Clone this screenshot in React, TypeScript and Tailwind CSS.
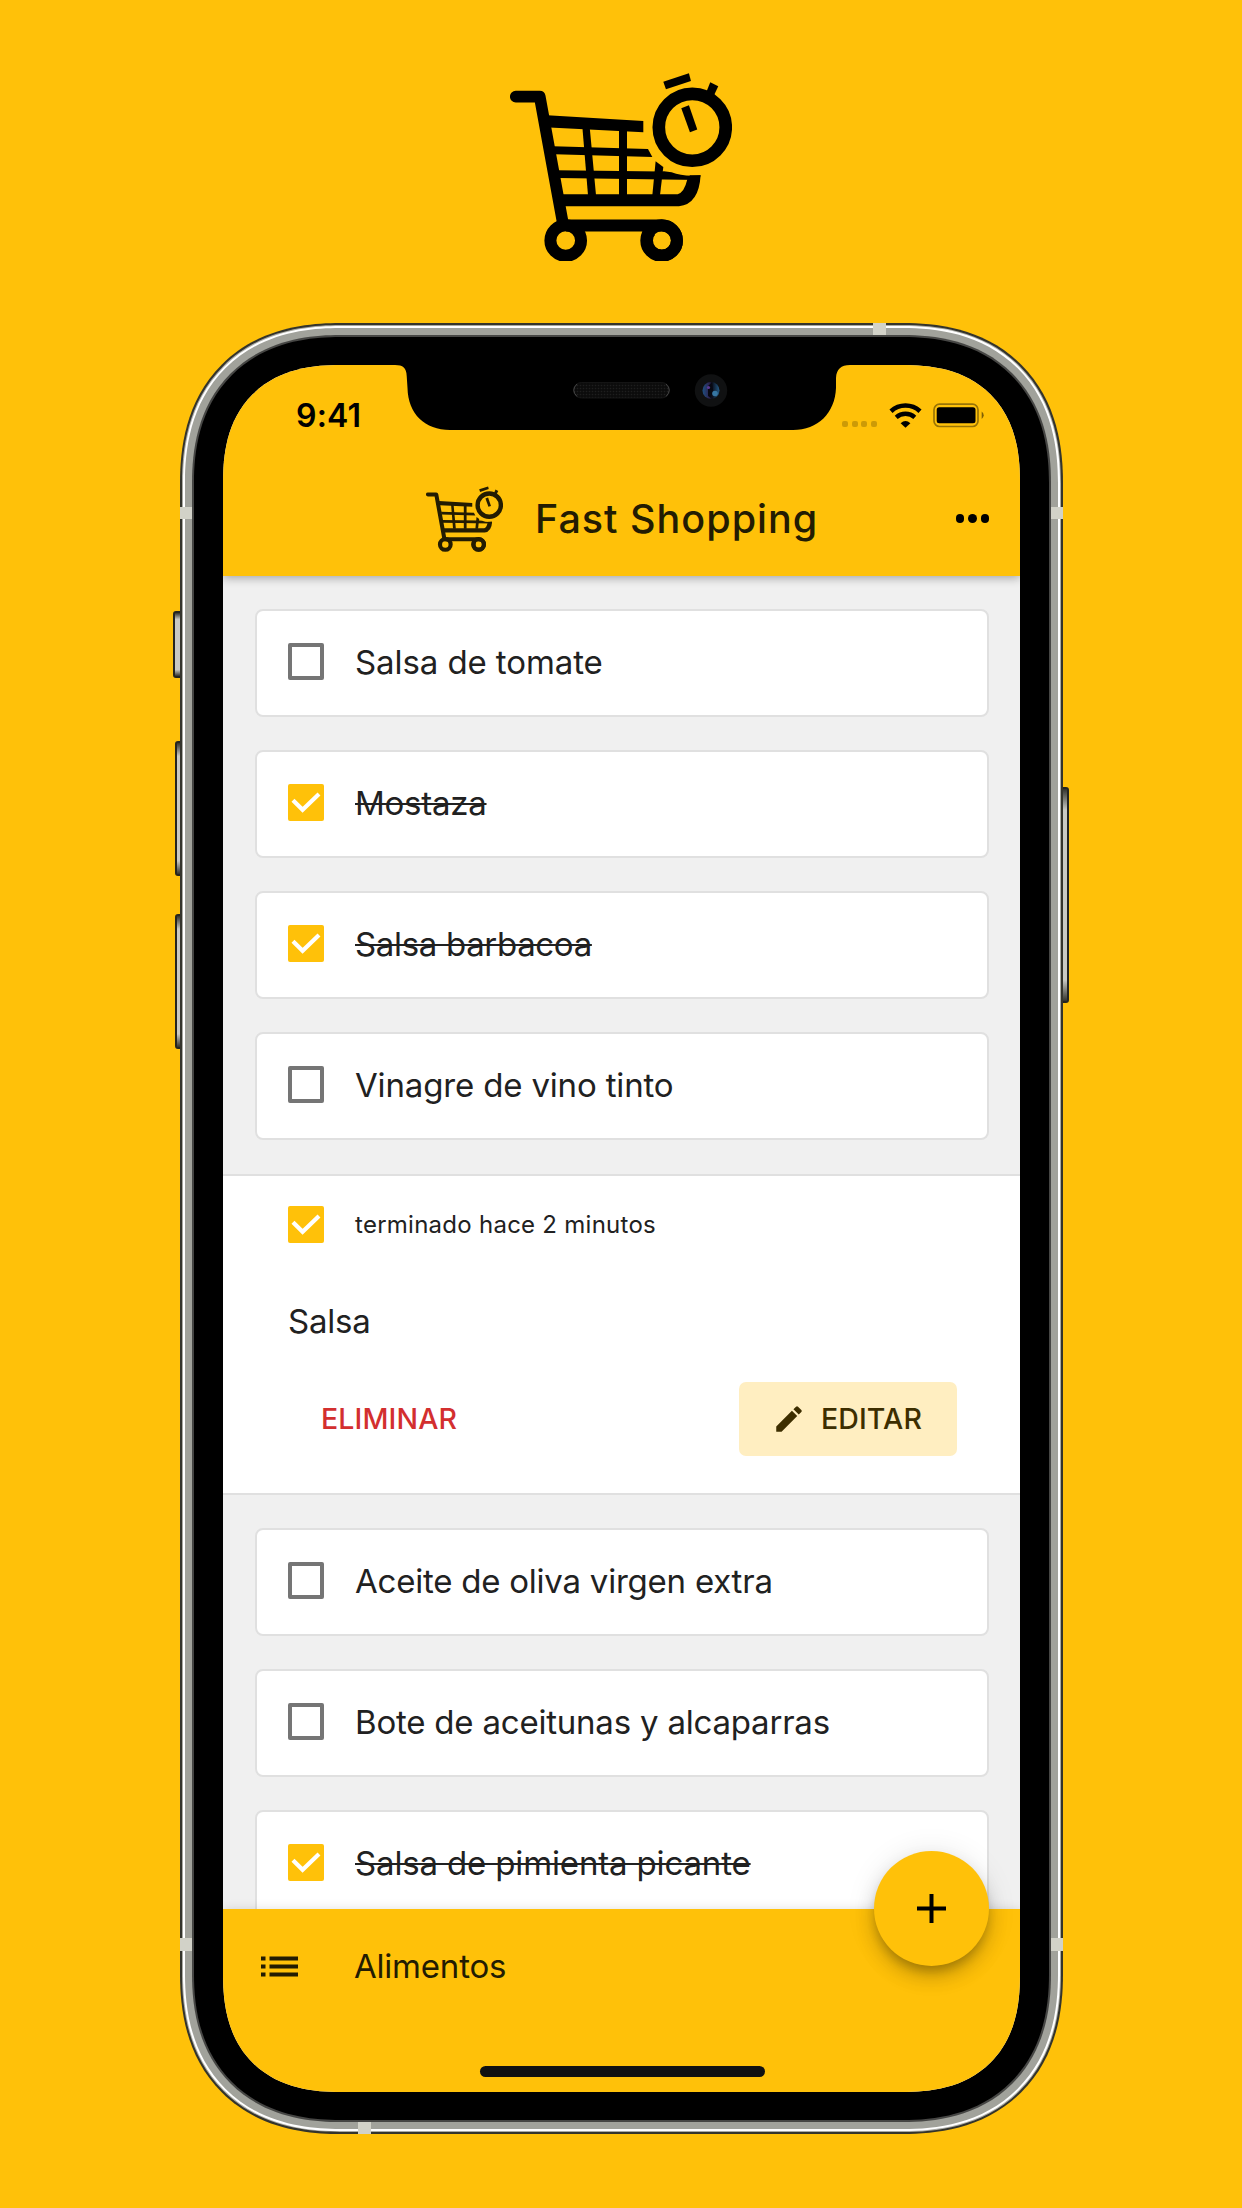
import React from "react";
import { MdEdit } from "react-icons/md";

function CartLogo({ className }: { className: string }) {
  return (
    <svg viewBox="60 38 666 566" className={className} fill="currentColor">
      <path d="M77 109H149L219 492" fill="none" stroke="currentColor" strokeWidth="35" strokeLinecap="round" strokeLinejoin="round" />
      <path d="M172 165L460 182V216L178 202Z" />
      <path d="M190 258L474 266L487 290L194 282Z" />
      <path d="M200 330L515 334L522 333L545 336Q580 350 632 345L628 359L205 353Z" />
      <path d="M277 200H299L318 406H294Z" />
      <path d="M387 206H411V406H387Z" />
      <path d="M497 303L520 320L510 406H487Z" />
      <path d="M205 402H563Q583 397 592 358L600 345L632 345Q627 432 567 438H215Z" />
      <path d="M227 496H516A45 45 0 1 1 471 541Q471 520 484 510" fill="none" stroke="currentColor" strokeWidth="36" />
      <circle cx="227" cy="541" r="46" fill="none" stroke="currentColor" strokeWidth="36" />
      <circle cx="515" cy="541" r="46" fill="none" stroke="currentColor" strokeWidth="36" />
      <circle cx="607" cy="201" r="100.500" fill="none" stroke="currentColor" strokeWidth="38" />
      <path d="M520 64L597 39L603 62L528 87Z" />
      <path d="M661 66L685 78L671 108L649 96Z" />
      <path d="M574 144L597 135L622 208L600 216Z" />
    </svg>
  );
}

function WifiIcon() {
  return (
    <svg viewBox="0 0 33 25" className="h-[25px] w-[33px]" fill="none" stroke="black">
      <path d="M2 8.200A21.500 21.500 0 0 1 31 8.200" strokeWidth="4.600" />
      <path d="M7.200 14.300A14 14 0 0 1 25.800 14.300" strokeWidth="4.400" />
      <path d="M11.600 20.300Q16.500 15.700 21.400 20.300L16.500 24.800Z" fill="black" stroke="none" />
    </svg>
  );
}

function BatteryIcon() {
  return (
    <svg viewBox="0 0 51 25" className="h-[25px] w-[51px]">
      <rect x="1" y="1.200" width="44" height="22.300" rx="5.500" fill="none" stroke="black" strokeOpacity="0.400" strokeWidth="1.700" />
      <rect x="3.700" y="4.200" width="38.800" height="16" rx="2.500" fill="black" />
      <path d="M48.700 8.500Q50.700 10 50.700 12.300T48.700 16Z" fill="black" fillOpacity="0.500" />
    </svg>
  );
}

function ListIcon() {
  return (
    <svg viewBox="0 0 49 49" className="size-[49px]" fill="currentColor">
      <path d="M6 14.500H10.500V18.500H6ZM6 22.500H10.500V26.500H6ZM6 30.500H10.500V34.500H6Z" />
      <path d="M14.500 14.500H43V18.500H14.500ZM14.500 22.500H43V26.500H14.500ZM14.500 30.500H43V34.500H14.500Z" />
    </svg>
  );
}

function Checkbox({ checked }: { checked: boolean }) {
  if (!checked) {
    return <span className="h-[37px] w-9 shrink-0 rounded-[2px] border-4 border-[#757575]" />;
  }
  return (
    <span className="h-[37px] w-9 shrink-0 rounded-[2px] bg-[#ffc109]">
      <svg viewBox="0 0 36 37" className="h-full w-full" fill="none" stroke="white" strokeWidth="4.200">
        <path d="M5 16.200L14.600 25.800L31 10" />
      </svg>
    </span>
  );
}

function Item({ text, checked = false, spacing }: { text: string; checked?: boolean; spacing: string }) {
  return (
    <div className="flex h-[108px] shrink-0 items-center gap-[31px] rounded-lg border-2 border-[#e0e0e0] bg-white pb-[3px] pl-[31px]">
      <Checkbox checked={checked} />
      <span
        className={`pt-px text-[33px] leading-10 whitespace-nowrap ${checked ? "line-through decoration-2" : ""} ${spacing}`}
      >
        {text}
      </span>
    </div>
  );
}

function Notch() {
  return (
    <svg viewBox="390 360 470 72" className="absolute -top-[5px] left-[167px] z-20 h-[72px] w-[470px]">
      <defs>
        <pattern id="mesh" width="3" height="3" patternUnits="userSpaceOnUse">
          <rect width="3" height="3" fill="#0c0c0c" />
          <circle cx="1.500" cy="1.500" r="0.800" fill="#1e1e1e" />
        </pattern>
        <linearGradient id="lens" x1="0" x2="1">
          <stop offset="0" stopColor="#1f4f80" />
          <stop offset="0.400" stopColor="#2c2350" />
          <stop offset="0.550" stopColor="#0a0c18" />
          <stop offset="1" stopColor="#245a85" />
        </linearGradient>
      </defs>
      <path d="M390 360V365H395C403 365 406.500 368 406.700 376L407.500 388C408 414 425 430 450 430H793C818 430 835 413 836 388V378C836.500 369 841 365 850 365H860V360Z" />
      <rect x="573.500" y="382.500" width="96" height="15.500" rx="7.750" fill="url(#mesh)" stroke="#141414" />
      <path d="M577 384Q570.500 390 577 396.500M666 384Q672.500 390 666 396.500" fill="none" stroke="#444" strokeWidth="1" />
      <circle cx="711" cy="390.500" r="16.200" fill="#101112" />
      <circle cx="711" cy="390.500" r="8.500" fill="url(#lens)" />
      <path d="M708 386L712 382.500L713 390L711 398L708 396Z" fill="#080912" />
      <circle cx="708.500" cy="387.500" r="1.600" fill="#5d3a94" />
      <circle cx="715" cy="393.500" r="2.800" fill="#3676a3" />
    </svg>
  );
}

function SideButton({ className }: { className: string }) {
  return (
    <div className={`absolute border-2 border-[#25251f] bg-[#c9c9c3] ${className}`}>
      <div className="h-full w-full bg-linear-to-b from-[#33332e] via-transparent via-10% to-transparent">
        <div className="h-full w-full bg-linear-to-t from-[#33332e] via-transparent via-10% to-transparent" />
      </div>
    </div>
  );
}

function Phone({ children }: { children: React.ReactNode }) {
  return (
    <div className="relative h-[1811px] w-[883px]">
      <SideButton className="top-[288px] -left-[7px] h-[67px] w-[12px] rounded-l-[3px]" />
      <SideButton className="top-[418px] -left-[5px] h-[135px] w-[10px] rounded-l-[3px]" />
      <SideButton className="top-[591px] -left-[5px] h-[135px] w-[10px] rounded-l-[3px]" />
      <SideButton className="top-[464px] -right-[6px] h-[216px] w-[11px] rounded-r-[3px]" />
      <div className="relative h-full rounded-[160px] bg-[#34342c] p-[2px] [corner-shape:superellipse(1.2)]">
        <div className="h-full rounded-[158px] bg-[#a9a9a3] p-px [corner-shape:superellipse(1.2)]">
          <div className="h-full rounded-[157px] bg-white p-[2px] [corner-shape:superellipse(1.2)]">
            <div className="h-full rounded-[155px] bg-[#a1a29b] p-[7px] [corner-shape:superellipse(1.2)]">
              <div className="h-full rounded-[148px] bg-[#464644] p-[2px] [corner-shape:superellipse(1.2)]">
                <div className="h-full rounded-[146px] bg-black px-[29px] py-[28px] [corner-shape:superellipse(1.2)]">
                  {children}
                </div>
              </div>
            </div>
          </div>
        </div>
      </div>
      <span className="absolute top-[184px] left-0 h-3 w-3 bg-[#d2d2c8]" />
      <span className="absolute top-[184px] right-0 h-3 w-3 bg-[#d2d2c8]" />
      <span className="absolute top-[1615px] left-0 h-[13px] w-3 bg-[#d2d2c8]" />
      <span className="absolute top-[1615px] right-0 h-[13px] w-3 bg-[#d2d2c8]" />
      <span className="absolute top-0 left-[693px] h-3 w-[13px] bg-[#d2d2c8]" />
      <span className="absolute bottom-0 left-[178px] h-3 w-[13px] bg-[#d2d2c8]" />
    </div>
  );
}

export default function App() {
  return (
    <div className="flex h-[2208px] w-[1242px] flex-col items-center overflow-hidden bg-[#ffc109] font-['Inter',sans-serif] text-[#212121]">
      <CartLogo className="mt-[72.500px] h-[188.500px] w-[222px] shrink-0 text-black" />
      <div className="mt-[62px] ml-px shrink-0">
        <Phone>
          <div className="relative flex h-full flex-col overflow-hidden rounded-[118px] bg-[#f0f0f0] [corner-shape:superellipse(1.27)]">
            <header className="relative z-10 h-[211px] shrink-0 bg-[#ffc109] shadow-[0_2px_9px_rgba(0,0,0,0.32)]">
              <div className="flex h-24 items-center pt-[5px] pr-[36px] pl-[73px]">
                <span className="text-[32px] leading-10 font-semibold tracking-[0.200px] text-black">9:41</span>
                <span className="mt-[17px] ml-auto flex gap-[3.600px]">
                  <i className="size-[6px] rounded-[2px] bg-black/20" />
                  <i className="size-[6px] rounded-[2px] bg-black/20" />
                  <i className="size-[6px] rounded-[2px] bg-black/20" />
                  <i className="size-[6px] rounded-[2px] bg-black/20" />
                </span>
                <span className="mr-[11px] ml-3">
                  <WifiIcon />
                </span>
                <BatteryIcon />
              </div>
              <div className="flex h-[115px] items-center pr-[31px] pl-[203px]">
                <CartLogo className="h-[66px] w-[77px] text-[#231c02]" />
                <h1 className="ml-8 text-[39.500px] leading-[48px] font-medium tracking-[1px] whitespace-nowrap text-[#231c02]">
                  Fast Shopping
                </h1>
                <span className="ml-auto flex gap-[4px]">
                  <i className="size-[8.300px] rounded-full bg-black" />
                  <i className="size-[8.300px] rounded-full bg-black" />
                  <i className="size-[8.300px] rounded-full bg-black" />
                </span>
              </div>
            </header>

            <main className="h-[1333px] shrink-0 overflow-hidden">
              <div className="flex flex-col gap-[33px] pt-[33px] pr-[31px] pb-[34px] pl-8">
                <Item text="Salsa de tomate" spacing="tracking-[-0.090px]" />
                <Item text="Mostaza" checked spacing="tracking-[-0.250px]" />
                <Item text="Salsa barbacoa" checked spacing="tracking-[-0.330px]" />
                <Item text="Vinagre de vino tinto" spacing="tracking-[-0.160px]" />
              </div>
              <section className="h-[321px] border-y-2 border-[#e0e0e0] bg-white pt-[30px] pr-[63px] pl-[65px]">
                <div className="flex h-[37px] items-center gap-[31px]">
                  <Checkbox checked />
                  <span className="text-[24px] leading-8 tracking-[0.260px] whitespace-nowrap">
                    terminado hace 2 minutos
                  </span>
                </div>
                <p className="mt-[58px] text-[33px] leading-10 tracking-[-0.200px]">Salsa</p>
                <div className="mt-[41px] flex items-center justify-between">
                  <button className="h-[74px] px-[33px] text-[28.500px] font-medium tracking-[0.130px] text-[#d32f2f]">
                    ELIMINAR
                  </button>
                  <button className="flex h-[74px] w-[218px] items-center gap-[15px] rounded-[7px] bg-[#ffeec1] pl-[33px] text-[28.500px] font-medium tracking-[0.110px] text-[#3d2e00]">
                    <MdEdit className="size-[34px]" />
                    EDITAR
                  </button>
                </div>
              </section>
              <div className="flex flex-col gap-[33px] pt-[33px] pr-[31px] pl-8">
                <Item text="Aceite de oliva virgen extra" spacing="tracking-[-0.230px]" />
                <Item text="Bote de aceitunas y alcaparras" spacing="tracking-[-0.210px]" />
                <Item text="Salsa de pimienta picante" checked spacing="tracking-[-0.150px]" />
              </div>
            </main>

            <footer className="relative h-[183px] shrink-0 bg-[#ffc109] shadow-[0_0_10px_rgba(0,0,0,0.12)]">
              <div className="flex h-[114px] items-center gap-[50px] pl-8 text-[#231c02]">
                <ListIcon />
                <span className="pb-px text-[33px] leading-10 tracking-[-0.210px]">Alimentos</span>
              </div>
              <div className="mt-[43px] ml-[257px] h-[11px] w-[285px] rounded-full bg-[#111]" />
            </footer>

            <button className="absolute top-[1486px] left-[651px] z-20 flex size-[115px] items-center justify-center rounded-full bg-[#ffc109] shadow-[0_7px_10px_-2px_rgba(0,0,0,0.2),0_12px_20px_rgba(0,0,0,0.16),0_2px_30px_rgba(0,0,0,0.1)]">
              <svg viewBox="0 0 29 29" className="size-[29px]" stroke="black" strokeWidth="4">
                <path d="M14.500 0V29M0 14.500H29" />
              </svg>
            </button>
            <Notch />
          </div>
        </Phone>
      </div>
    </div>
  );
}
